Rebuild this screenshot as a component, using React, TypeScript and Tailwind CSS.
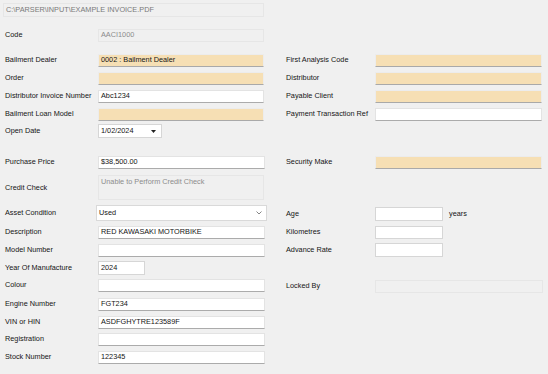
import React from "react";

type Kind = "tan" | "white" | "gray";

const boxKind: Record<Kind, string> = {
  tan: "bg-[#f6dfb4] border border-[#ececec] border-b-[#a9a9a9]",
  white: "bg-white border border-[#e3e3e3] border-b-[#ababab]",
  gray: "bg-[#f0f0f0] border border-[#e6e6e6] text-[#8c8c8c]",
};

const Box = ({
  kind,
  value,
  className,
}: {
  kind: Kind;
  value?: string;
  className: string;
}) => (
  <div className={`${boxKind[kind]} ${className} flex items-center pl-[2px] overflow-hidden whitespace-nowrap`}>
    {value}
  </div>
);

const Field = ({
  label,
  kind,
  value,
  row,
  box,
  labelW,
}: {
  label: string;
  kind: Kind;
  value?: string;
  row: string;
  box: string;
  labelW: string;
}) => (
  <div className={`flex items-center ${row}`}>
    <div className={`${labelW} shrink-0`}>{label}</div>
    <Box kind={kind} value={value} className={box} />
  </div>
);

const App = () => {
  return (
    <div
      className="w-[548px] h-[374px] bg-[#f0f0f0] text-[7.3px] text-[#151515] overflow-hidden flex"
      style={{ fontFamily: '"Liberation Sans", Arial, sans-serif' }}
    >
      {/* left column */}
      <div className="w-[284px] shrink-0 flex flex-col pl-[3px]">
        <div className="mt-[3px] h-[14px] w-[261px] bg-[#f0f0f0] border border-[#e6e6e6] flex items-center pl-[2px] text-[#7a7a7a]">
          C:\PARSER\INPUT\EXAMPLE INVOICE.PDF
        </div>
        <Field label="Code" kind="gray" value="AACI1000" row="mt-[12px] pl-[2px]" labelW="w-[93px]" box="w-[166px] h-[13px]" />
        <Field label="Bailment Dealer" kind="tan" value="0002 : Bailment Dealer" row="mt-[12px] pl-[2px]" labelW="w-[93px]" box="w-[166px] h-[13px]" />
        <Field label="Order" kind="tan" row="mt-[5px] pl-[2px]" labelW="w-[93px]" box="w-[166px] h-[13px]" />
        <Field label="Distributor Invoice Number" kind="white" value="Abc1234" row="mt-[5px] pl-[2px]" labelW="w-[93px]" box="w-[166px] h-[13px]" />
        <Field label="Bailment Loan Model" kind="tan" row="mt-[5px] pl-[2px]" labelW="w-[93px]" box="w-[166px] h-[13px]" />

        <div className="mt-[3px] pl-[2px] flex items-center">
          <div className="w-[93px] shrink-0">Open Date</div>
          <div className="w-[64px] h-[14px] bg-white border border-[#d6d6d6] flex items-center pl-[2px] justify-between pr-[5px]">
            <span>1/02/2024</span>
            <svg width="5" height="3" viewBox="0 0 5 3">
              <path d="M0 0h5L2.5 3z" fill="#222" />
            </svg>
          </div>
        </div>

        <Field label="Purchase Price" kind="white" value="$38,500.00" row="mt-[18px] pl-[2px]" labelW="w-[93px]" box="w-[167px] h-[13px]" />

        <div className="mt-[6px] pl-[2px] flex items-center">
          <div className="w-[93px] shrink-0 pt-[1px]">Credit Check</div>
          <div className="w-[166px] h-[25px] bg-[#f0f0f0] border border-[#e6e6e6] text-[#8c8c8c] pl-[2px] pt-[1px]">
            Unable to Perform Credit Check
          </div>
        </div>

        <div className="mt-[5px] pl-[2px] flex items-center">
          <div className="w-[91px] shrink-0">Asset Condition</div>
          <div className="w-[171px] h-[16px] bg-white border border-[#d9d9d9] flex items-center justify-between pl-[2px] pr-[4px]">
            <span>Used</span>
            <svg width="6" height="4" viewBox="0 0 6 4">
              <path d="M0.5 0.5L3 3L5.5 0.5" fill="none" stroke="#777" strokeWidth="0.9" />
            </svg>
          </div>
        </div>

        <Field label="Description" kind="white" value="RED KAWASAKI MOTORBIKE" row="mt-[5px] pl-[2px]" labelW="w-[93px]" box="w-[167px] h-[13px]" />
        <Field label="Model Number" kind="white" row="mt-[5px] pl-[2px]" labelW="w-[93px]" box="w-[167px] h-[13px]" />

        <div className="mt-[4px] pl-[2px] flex items-center">
          <div className="w-[93px] shrink-0">Year Of Manufacture</div>
          <div className="w-[47px] h-[14px] bg-white border border-[#d6d6d6] flex items-center pl-[2px]">2024</div>
        </div>

        <Field label="Colour" kind="white" row="mt-[4px] pl-[2px]" labelW="w-[93px]" box="w-[167px] h-[13px]" />
        <Field label="Engine Number" kind="white" value="FGT234" row="mt-[6px] pl-[2px]" labelW="w-[93px]" box="w-[167px] h-[13px]" />
        <Field label="VIN or HIN" kind="white" value="ASDFGHYTRE123589F" row="mt-[5px] pl-[2px]" labelW="w-[93px]" box="w-[167px] h-[13px]" />
        <Field label="Registration" kind="white" row="mt-[4px] pl-[2px]" labelW="w-[93px]" box="w-[167px] h-[13px]" />
        <Field label="Stock Number" kind="white" value="122345" row="mt-[5px] pl-[2px]" labelW="w-[93px]" box="w-[167px] h-[13px]" />
      </div>

      {/* right column */}
      <div className="flex-1 flex flex-col pl-[2px]">
        <Field label="First Analysis Code" kind="tan" row="mt-[54px]" labelW="w-[89px]" box="w-[167px] h-[13px]" />
        <Field label="Distributor" kind="tan" row="mt-[5px]" labelW="w-[89px]" box="w-[167px] h-[13px]" />
        <Field label="Payable Client" kind="tan" row="mt-[5px]" labelW="w-[89px]" box="w-[167px] h-[13px]" />
        <Field label="Payment Transaction Ref" kind="white" row="mt-[5px]" labelW="w-[89px]" box="w-[167px] h-[13px]" />
        <Field label="Security Make" kind="tan" row="mt-[35px]" labelW="w-[89px]" box="w-[167px] h-[13px]" />

        <div className="mt-[38px] flex items-center">
          <div className="w-[89px] shrink-0">Age</div>
          <div className="w-[68px] h-[14px] bg-white border border-[#d6d6d6]" />
          <span className="ml-[6px]">years</span>
        </div>
        <div className="mt-[5px] flex items-center">
          <div className="w-[89px] shrink-0">Kilometres</div>
          <div className="w-[68px] h-[13px] bg-white border border-[#d6d6d6]" />
        </div>
        <div className="mt-[4px] flex items-center">
          <div className="w-[89px] shrink-0">Advance Rate</div>
          <div className="w-[68px] h-[14px] bg-white border border-[#d6d6d6]" />
        </div>

        <Field label="Locked By" kind="gray" row="mt-[23px]" labelW="w-[89px]" box="w-[168px] h-[13px]" />
      </div>
    </div>
  );
};

export default App;
